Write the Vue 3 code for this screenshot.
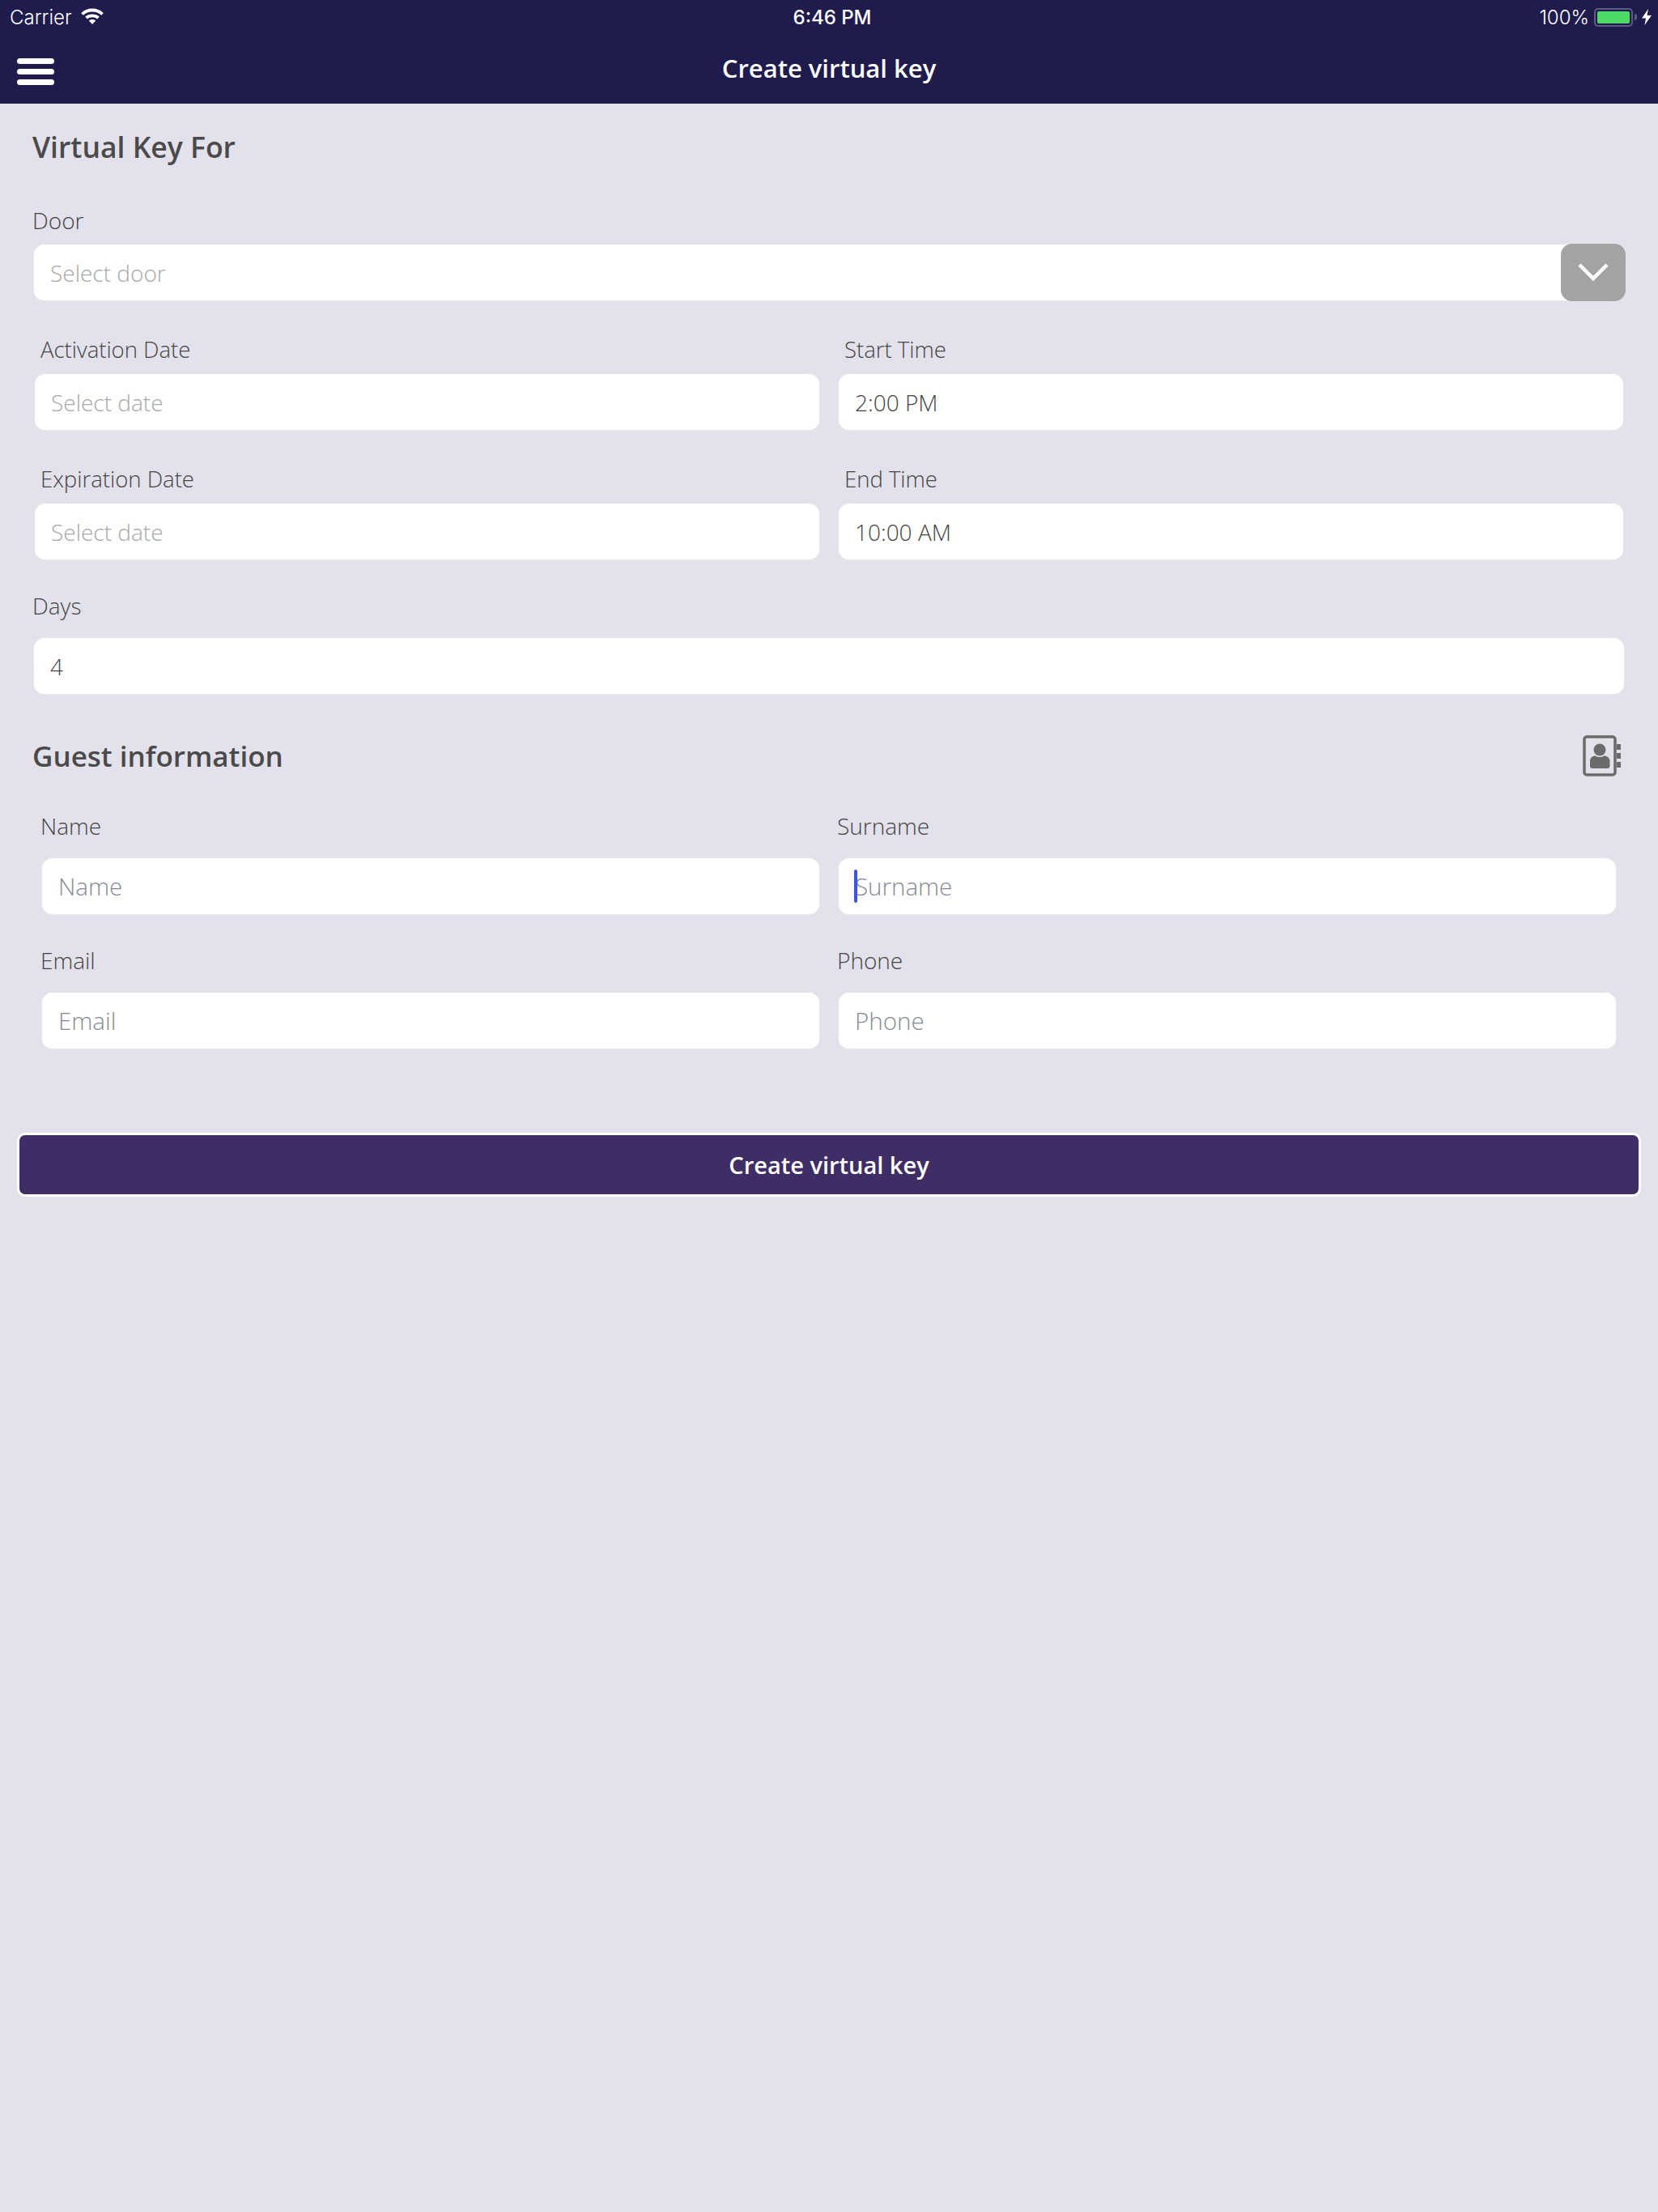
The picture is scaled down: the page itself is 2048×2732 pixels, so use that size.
<script setup>
const dateRows = [
  [
    { label: 'Activation Date', value: 'Select date', empty: true },
    { label: 'Start Time', value: '2:00 PM' },
  ],
  [
    { label: 'Expiration Date', value: 'Select date', empty: true },
    { label: 'End Time', value: '10:00 AM' },
  ],
]
</script>

<template>
  <div class="page">
    <header class="top">
      <div class="status">
        <div class="status-left">
          <span>Carrier</span>
          <svg class="wifi" width="28" height="20" viewBox="0 0 28 20" fill="none" stroke="#fff" stroke-width="3.8">
            <path d="M1.500 7.500C8.500 .8 19.500 .8 26.500 7.500" />
            <path d="M6.500 12C10.500 8.500 17.500 8.500 21.500 12" />
            <path d="M14 20 9.800 15.500C12 13.500 16 13.500 18.200 15.500Z" fill="#fff" stroke="none" />
          </svg>
        </div>
        <span class="clock">6:46 PM</span>
        <div class="status-right">
          <span>100%</span>
          <div class="battery"><div class="charge"></div></div>
          <div class="nub"></div>
          <svg class="bolt" width="12" height="20" viewBox="0 0 12 20"><path d="M8 0 0 11.500H5L3.500 20 12 8H6.500Z" fill="#fff" /></svg>
        </div>
      </div>
      <div class="nav">
        <div class="burger"><i></i><i></i><i></i></div>
        <h1>Create virtual key</h1>
      </div>
    </header>

    <main class="content">
      <h2 class="section first">Virtual Key For</h2>
      <label class="label door-label">Door</label>
      <div class="field door">
        <span class="hint">Select door</span>
        <div class="drop">
          <svg width="38" height="24" viewBox="0 0 38 24" fill="none" stroke="#fff" stroke-width="4.500"><path d="M2 3 19 20 36 3" /></svg>
        </div>
      </div>

      <div v-for="(row, i) in dateRows" :key="i" class="row dates">
        <div v-for="cell in row" :key="cell.label" class="cell">
          <label class="label inset">{{ cell.label }}</label>
          <div class="field"><span :class="cell.empty ? 'hint' : 'value'">{{ cell.value }}</span></div>
        </div>
      </div>

      <label class="label days-label">Days</label>
      <div class="field days"><span class="value">4</span></div>

      <div class="guest-head">
        <h2 class="section">Guest information</h2>
        <svg class="book" width="48" height="52" viewBox="0 0 48 52">
          <rect x="2" y="2" width="38" height="47" rx="3" fill="none" stroke="#6b6b6b" stroke-width="3.500" />
          <path d="M42 11h5v7h-5zM42 22h5v7h-5zM42 33h5v7h-5z" fill="#6b6b6b" />
          <circle cx="21" cy="18" r="7.500" fill="#6b6b6b" />
          <path d="M9 38V32C9 27 13 25.500 16 25.500 18 27.500 24 27.500 26 25.500 29 25.500 33.500 27 33.500 32V38C33.500 40 32 41 31 41H12C10 41 9 40 9 38Z" fill="#6b6b6b" />
        </svg>
      </div>

      <div class="row guest">
        <div class="cell">
          <label class="label">Name</label>
          <div class="field"><span class="ghost">Name</span></div>
        </div>
        <div class="cell shifted">
          <label class="label">Surname</label>
          <div class="field"><span class="ghost caret-wrap"><i class="caret"></i>Surname</span></div>
        </div>
      </div>
      <div class="row guest second">
        <div class="cell">
          <label class="label">Email</label>
          <div class="field"><span class="ghost">Email</span></div>
        </div>
        <div class="cell shifted">
          <label class="label">Phone</label>
          <div class="field"><span class="ghost">Phone</span></div>
        </div>
      </div>

      <button class="submit" type="button">Create virtual key</button>
    </main>
  </div>
</template>

<style scoped>
.page {
  width: 2048px;
  height: 2732px;
  background: #e3e2ec;
  font-family: "Open Sans", "Noto Sans", sans-serif;
  color: #4a4a4a;
  overflow: hidden;
}
.top {
  height: 128px;
  background: #201b4d;
  color: #fff;
}
.status {
  height: 42px;
  display: grid;
  grid-template-columns: 1fr auto 1fr;
  align-items: center;
  padding: 0 8px 0 12px;
  font-family: "Inter", sans-serif;
  font-size: 24px;
  font-weight: 300;
}
.status-left {
  display: flex;
  align-items: center;
  gap: 11px;
}
.wifi { margin-top: -2px; }
.clock {
  font-weight: 500;
  font-size: 24px;
  margin-left: 4px;
}
.status-right {
  display: flex;
  align-items: center;
  justify-content: flex-end;
}
.battery {
  width: 48px;
  height: 23px;
  margin-left: 6px;
  border: 2px solid #5e5a82;
  border-radius: 5px;
  padding: 2px;
  box-sizing: border-box;
}
.charge {
  height: 100%;
  background: #4cd964;
  border-radius: 2px;
}
.nub {
  width: 3px;
  height: 8px;
  margin-left: 2px;
  background: #5e5a82;
  border-radius: 0 3px 3px 0;
}
.bolt { margin-left: 6px; }
.nav {
  position: relative;
  height: 86px;
  display: flex;
  align-items: center;
  justify-content: center;
}
.nav h1 {
  margin: -3px 0 0;
  font-size: 31px;
  font-weight: 600;
  line-height: 44px;
}
.burger {
  position: absolute;
  left: 21px;
  top: 30px;
  width: 46px;
  display: flex;
  flex-direction: column;
  gap: 6px;
}
.burger i {
  display: block;
  height: 7px;
  background: #fff;
  border-radius: 4px;
}
.content {
  padding: 0 40px;
}
.section {
  margin: 0;
  font-size: 35px;
  line-height: 48px;
  font-weight: 600;
  color: #4a4a4a;
}
.section.first { padding-top: 29px; font-size: 35.5px; }
.label {
  display: block;
  font-size: 28px;
  line-height: 38px;
  font-weight: 300;
  color: #444;
}
.door-label { margin-top: 48px; }
.field {
  height: 72px;
  box-sizing: border-box;
  background: #fff;
  border: 1px solid #e6e6e8;
  border-bottom-width: 2px;
  border-radius: 14px;
  display: flex;
  align-items: center;
  padding: 0 20px;
  font-size: 28px;
  font-weight: 300;
}
.door {
  position: relative;
  margin: 10px 0 0;
}
.door, .days { margin-left: 1px; margin-right: 1px; }
.door .hint { font-size: 28px; }
.drop {
  position: absolute;
  right: -2px;
  top: -1px;
  width: 80px;
  height: 71px;
  background: #a3a3a3;
  border-radius: 14px;
  display: flex;
  align-items: center;
  justify-content: center;
}
.drop svg { margin-top: -2px; }
.hint { color: #a8a8a8; font-size: 28px; }
.value { color: #444; }
.ghost { color: #868a94; font-size: 29.500px; }
.row {
  display: grid;
  grid-template-columns: 971px 971px;
  column-gap: 22px;
}
.dates {
  margin: 0 2px;
  padding-top: 40px;
}
.dates .cell .inset {
  padding-left: 8px;
  margin-bottom: 10px;
  font-size: 27.500px;
}
.days-label { margin-top: 36px; }
.days { margin-top: 20px; }
.guest-head {
  margin-top: 50px;
  height: 50px;
  display: flex;
  align-items: center;
  justify-content: space-between;
}
.book { margin-top: -1px; margin-right: 5px; }
.guest {
  margin-left: 11px;
  padding-top: 42px;
  grid-template-columns: 962px 962px;
}
.guest.second { padding-top: 36px; }
.guest .label { margin-bottom: 20px; margin-left: -1px; }
.caret-wrap { position: relative; }
.caret {
  position: absolute;
  left: -1px;
  top: 0;
  width: 4px;
  height: 41px;
  background: #3a53f0;
  border-radius: 2px;
}
.submit {
  display: block;
  width: 2006px;
  height: 79px;
  margin: 102px 0 0 -19px;
  background: #3f2e66;
  border: 3px solid #fff;
  border-radius: 10px;
  color: #fff;
  font-family: inherit;
  font-size: 29px;
  font-weight: 600;
  padding: 0;
}
</style>
